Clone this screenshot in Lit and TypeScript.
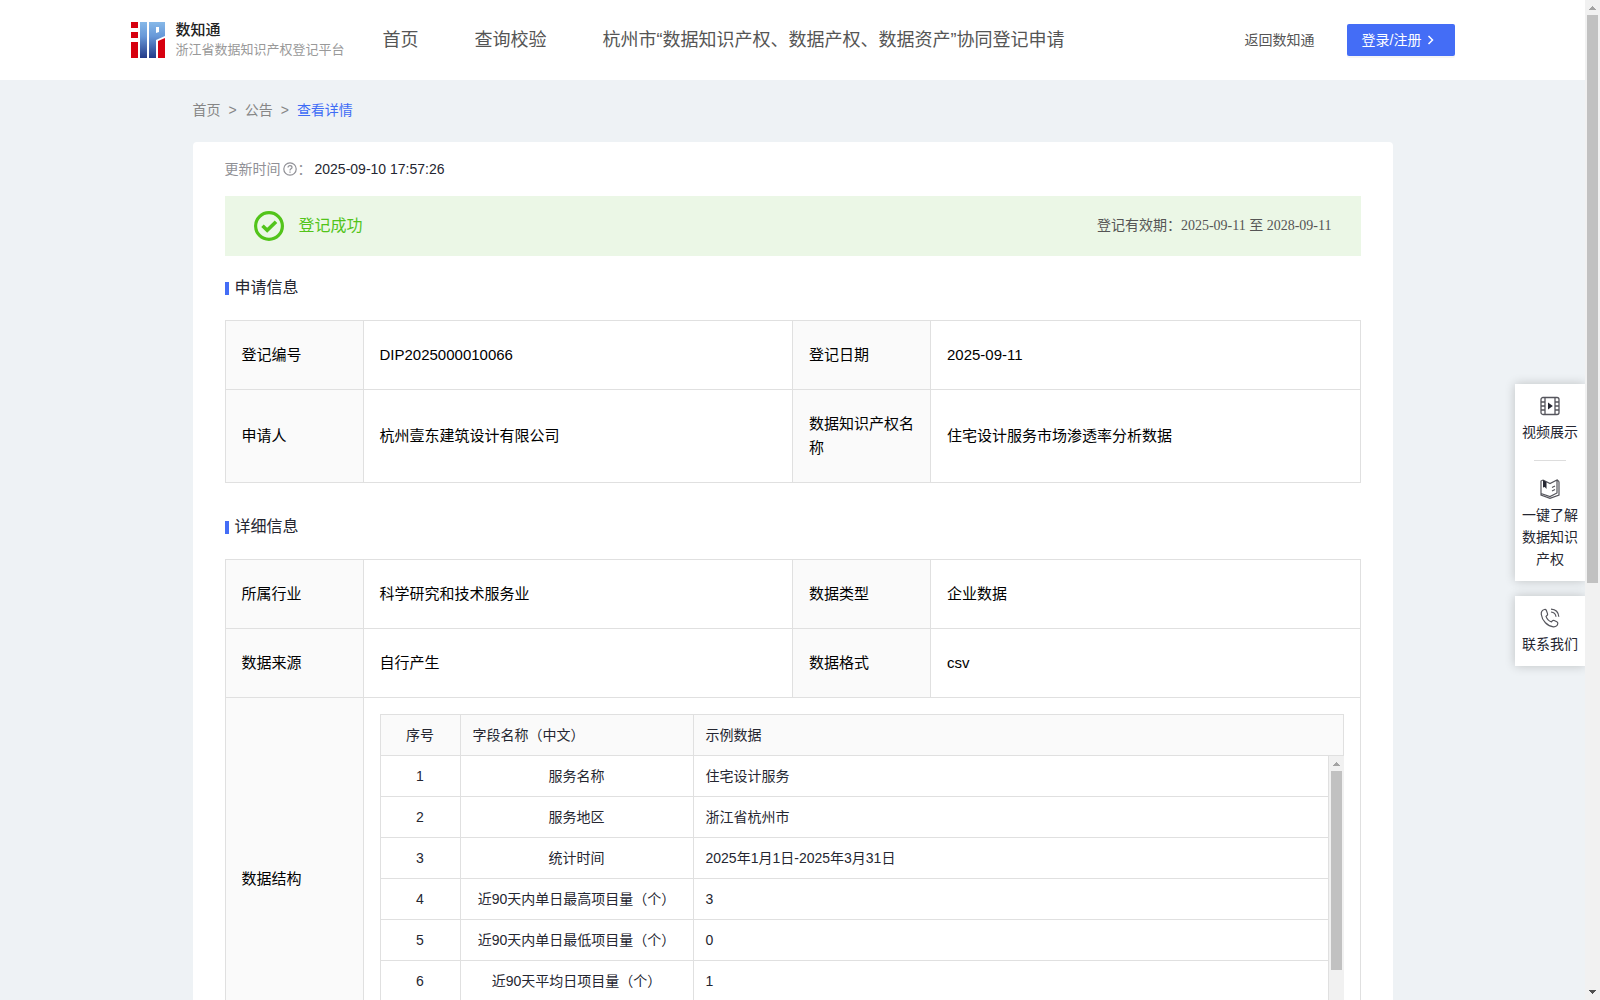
import { LitElement, html, css, svg, nothing } from "lit";
import { customElement } from "lit/decorators.js";

interface Field {
  label: string;
  value: string;
}

interface SampleRow {
  no: number;
  name: string;
  sample: string;
}

const APPLICATION: Field[][] = [
  [
    { label: "登记编号", value: "DIP2025000010066" },
    { label: "登记日期", value: "2025-09-11" },
  ],
  [
    { label: "申请人", value: "杭州壹东建筑设计有限公司" },
    { label: "数据知识产权名称", value: "住宅设计服务市场渗透率分析数据" },
  ],
];

const DETAILS: Field[][] = [
  [
    { label: "所属行业", value: "科学研究和技术服务业" },
    { label: "数据类型", value: "企业数据" },
  ],
  [
    { label: "数据来源", value: "自行产生" },
    { label: "数据格式", value: "csv" },
  ],
];

const SAMPLES: SampleRow[] = [
  { no: 1, name: "服务名称", sample: "住宅设计服务" },
  { no: 2, name: "服务地区", sample: "浙江省杭州市" },
  { no: 3, name: "统计时间", sample: "2025年1月1日-2025年3月31日" },
  { no: 4, name: "近90天内单日最高项目量（个）", sample: "3" },
  { no: 5, name: "近90天内单日最低项目量（个）", sample: "0" },
  { no: 6, name: "近90天平均日项目量（个）", sample: "1" },
];

const logoIcon = svg`
  <svg class="logo-mark" viewBox="0 0 34 36" aria-hidden="true">
    <defs>
      <linearGradient id="logo-blue" gradientUnits="userSpaceOnUse" x1="0" y1="0" x2="0" y2="36">
        <stop offset="0" stop-color="#86b8e8" />
        <stop offset="0.4" stop-color="#6798d8" />
        <stop offset="1" stop-color="#233a88" />
      </linearGradient>
    </defs>
    <path fill="#d7000f" d="M0 0h7v6H0zM0 10h7v6H0zM0 20h7v16H0zM27 19l7-3v20h-7z" />
    <path fill="url(#logo-blue)" fill-rule="evenodd"
      d="M9 0h7v36H9zM18 0h16v14l-9 4v18h-7zM25 5v6l3-1V5z" />
  </svg>`;

@customElement("scroll-track")
export class ScrollTrack extends LitElement {
  static properties = { thumb: { type: Number } };
  declare thumb: number;

  static styles = css`
    :host {
      display: flex;
      flex-direction: column;
      flex: none;
      width: 15px;
      background: #f1f1f1;
    }
    .arrow {
      display: block;
      width: 15px;
      height: 15px;
      flex: none;
    }
    .rail {
      flex: 1;
      min-height: 0;
      padding: 0 2px;
    }
    .thumb {
      width: 11px;
      background: #c1c1c1;
    }
  `;

  render() {
    return html`
      <svg class="arrow" viewBox="0 0 15 15" aria-hidden="true">
        <path fill="#a3a3a3" d="M4 10h7v-1h-1v-1H9v-1H8v-1H7v1H6v1H5v1H4z" />
      </svg>
      <div class="rail"><div class="thumb" style="height:${this.thumb}%"></div></div>
      <svg class="arrow" viewBox="0 0 15 15" aria-hidden="true">
        <path fill="#505050" d="M4 5h7v1h-1v1H9v1H8v1H7V8H6V7H5V6H4z" />
      </svg>
    `;
  }
}

@customElement("app-root")
export class AppRoot extends LitElement {
  static styles = css`
    :host {
      display: flex;
      position: relative;
      height: 100vh;
      overflow: hidden;
      background: #eef2f5;
      color: #252631;
      font-family: "Liberation Sans", "Noto Sans CJK SC", sans-serif;
      font-size: 14px;
      line-height: 22px;
    }
    * {
      box-sizing: border-box;
    }
    a {
      color: inherit;
      text-decoration: none;
    }
    .page {
      flex: 1;
      min-width: 0;
      overflow-y: auto;
      scrollbar-width: none;
    }

    .header {
      background: #fff;
    }
    .header-inner {
      display: flex;
      align-items: center;
      max-width: 1324px;
      height: 80px;
      margin: 0 auto;
      color: #555;
    }
    .logo {
      display: flex;
      align-items: center;
      gap: 11px;
      width: 252px;
      white-space: nowrap;
    }
    .logo-mark {
      width: 34px;
      height: 36px;
    }
    .logo-text {
      display: grid;
    }
    .logo-name {
      color: #222;
      font-size: 15px;
      font-weight: 500;
      line-height: 20px;
    }
    .logo-sub {
      color: #999;
      font-size: 13px;
      line-height: 20px;
    }
    .nav {
      display: flex;
      flex: 1;
      gap: 56px;
      font-size: 18px;
      line-height: 24px;
      white-space: nowrap;
    }
    .back {
      margin-right: 32px;
    }
    .login {
      display: flex;
      align-items: center;
      gap: 4px;
      width: 108px;
      height: 32px;
      padding: 0 15px;
      border: 0;
      border-radius: 2px;
      background: #446df6;
      box-shadow: 0 2px 0 rgba(0, 0, 0, 0.04);
      color: #fff;
      font: inherit;
      white-space: nowrap;
    }
    .login svg {
      width: 12px;
      height: 12px;
    }

    .content {
      max-width: 1200px;
      margin: 0 auto;
    }
    .crumbs {
      display: flex;
      gap: 8px;
      padding: 19px 0 21px;
      color: #868686;
    }
    .crumbs .current {
      color: #3f6cf5;
    }
    .card {
      padding: 16px 32px 32px;
      border-radius: 4px 4px 0 0;
      background: #fff;
    }
    .updated {
      display: flex;
      align-items: center;
      color: #909096;
    }
    .updated svg {
      width: 14px;
      height: 14px;
      margin: 0 1px 0 2px;
    }
    .updated time {
      margin-left: 3px;
      color: #252631;
    }
    .banner {
      display: flex;
      align-items: center;
      height: 60px;
      margin-top: 16px;
      padding: 0 29px;
      background: #ebf7e6;
    }
    .banner svg {
      width: 30px;
      height: 30px;
      margin-right: 15px;
    }
    .banner strong {
      flex: 1;
      color: #52c41a;
      font-size: 16px;
      font-weight: 400;
    }
    .validity {
      color: #555;
      font-family: "Liberation Serif", "Noto Sans CJK SC", serif;
    }
    h2 {
      display: flex;
      align-items: center;
      gap: 6px;
      margin: 20px 0;
      font-size: 16px;
      font-weight: 400;
      line-height: 24px;
    }
    h2::before {
      width: 4px;
      height: 13px;
      background: #446df6;
      content: "";
    }
    .info + h2 {
      margin-top: 32px;
    }

    table {
      width: 100%;
      border-collapse: collapse;
      table-layout: fixed;
    }
    th,
    td {
      border: 1px solid #e0e0e0;
      font-weight: 400;
      text-align: left;
    }
    th {
      background: #fafafa;
    }
    .info {
      color: #000;
      font-size: 15px;
      line-height: 24px;
    }
    .info > tbody > tr > * {
      padding: 22px 16px;
    }
    .info .label-col {
      width: 138px;
    }
    .info > tbody > tr > .nested {
      padding: 16px;
    }
    .samples {
      color: #252631;
      font-size: 14px;
      line-height: 20px;
    }
    .samples th,
    .samples td {
      padding: 10px 12px;
    }
    .samples .no-col {
      width: 80px;
    }
    .samples .name-col {
      width: 233px;
    }
    .samples .center {
      text-align: center;
    }
    .sample-body {
      display: flex;
      height: 288px;
    }
    .sample-view {
      flex: 1;
      min-width: 0;
      overflow-y: auto;
      scrollbar-width: none;
    }
    .sample-view tr:first-child td {
      border-top: 0;
    }

    .side {
      position: absolute;
      top: 384px;
      right: 15px;
      display: grid;
      gap: 15px;
      width: 70px;
      text-align: center;
    }
    .side-box {
      display: grid;
      justify-items: center;
      background: #fff;
      box-shadow: 0 0 10px rgba(0, 0, 0, 0.2);
      clip-path: inset(-12px 0 -12px -12px);
    }
    .side-item {
      display: grid;
      justify-items: center;
      gap: 5px;
      width: 100%;
      padding: 12px 7px 11px;
    }
    .side-box hr + .side-item {
      padding-top: 18px;
    }
    .side-item svg {
      width: 20px;
      height: 20px;
    }
    .side-box hr {
      width: 32px;
      height: 1px;
      margin: 6px 0 0;
      border: 0;
      background: #ddd;
    }
  `;

  private rows(rows: Field[][]) {
    return rows.map(
      (row) => html`<tr>
        ${row.map((f) => html`<th scope="row">${f.label}</th><td>${f.value}</td>`)}
      </tr>`
    );
  }

  private infoTable(rows: Field[][], extra: unknown = nothing) {
    return html`<table class="info">
      <colgroup>
        <col class="label-col" /><col /><col class="label-col" /><col />
      </colgroup>
      <tbody>
        ${this.rows(rows)}${extra}
      </tbody>
    </table>`;
  }

  private sampleCols() {
    return html`<colgroup><col class="no-col" /><col class="name-col" /><col /></colgroup>`;
  }

  private structureRow() {
    return html`<tr>
      <th scope="row">数据结构</th>
      <td class="nested" colspan="3">
        <div class="samples">
          <table>
            ${this.sampleCols()}
            <thead>
              <tr>
                <th class="center" scope="col">序号</th>
                <th scope="col">字段名称（中文）</th>
                <th scope="col">示例数据</th>
              </tr>
            </thead>
          </table>
          <div class="sample-body">
            <div class="sample-view">
              <table>
                ${this.sampleCols()}
                <tbody>
                  ${SAMPLES.map(
                    (s) => html`<tr>
                      <td class="center">${s.no}</td>
                      <td class="center">${s.name}</td>
                      <td>${s.sample}</td>
                    </tr>`
                  )}
                </tbody>
              </table>
            </div>
            <scroll-track .thumb=${77}></scroll-track>
          </div>
        </div>
      </td>
    </tr>`;
  }

  render() {
    return html`
      <div class="page">
        <header class="header">
          <div class="header-inner">
            <a class="logo" href="#">
              ${logoIcon}
              <span class="logo-text">
                <span class="logo-name">数知通</span>
                <span class="logo-sub">浙江省数据知识产权登记平台</span>
              </span>
            </a>
            <nav class="nav">
              <a href="#">首页</a>
              <a href="#">查询校验</a>
              <a href="#">杭州市“数据知识产权、数据产权、数据资产”协同登记申请</a>
            </nav>
            <a class="back" href="#">返回数知通</a>
            <button class="login" type="button">
              登录/注册
              <svg viewBox="0 0 12 12" fill="none" stroke="#fff" stroke-width="1.5" aria-hidden="true">
                <path d="M3.5 2 7.500 6l-4 4" />
              </svg>
            </button>
          </div>
        </header>

        <main class="content">
          <nav class="crumbs">
            <a href="#">首页</a><span>&gt;</span><a href="#">公告</a><span>&gt;</span>
            <a class="current" href="#">查看详情</a>
          </nav>
          <section class="card">
            <div class="updated">
              <span>更新时间</span>
              <svg viewBox="0 0 14 14" fill="none" stroke="#909096" stroke-width="1.2" aria-hidden="true">
                <circle cx="7" cy="7" r="6.200" />
                <path d="M5 5.600C5 4.300 5.900 3.600 7 3.600s2 .7 2 1.800c0 1.400-2 1.500-2 3M7 9.600v1.200" />
              </svg>
              <span>：</span>
              <time>2025-09-10 17:57:26</time>
            </div>
            <div class="banner">
              <svg viewBox="0 0 30 30" fill="none" stroke="#52c41a" aria-hidden="true">
                <circle cx="15" cy="15" r="13.400" stroke-width="3.200" />
                <path d="m8.500 14.800 4.700 4.500 8.800-8.500" stroke-width="3.600" />
              </svg>
              <strong>登记成功</strong>
              <span class="validity">登记有效期：2025-09-11 至 2028-09-11</span>
            </div>
            <h2>申请信息</h2>
            ${this.infoTable(APPLICATION)}
            <h2>详细信息</h2>
            ${this.infoTable(DETAILS, this.structureRow())}
          </section>
        </main>
      </div>
      <scroll-track .thumb=${58.6}></scroll-track>

      <aside class="side">
        <div class="side-box">
          <a class="side-item" href="#">
            <svg viewBox="0 0 20 20" fill="none" stroke="#55555c" stroke-width="1.300" aria-hidden="true">
              <rect x="1" y="1.500" width="18" height="17" rx="2" />
              <path d="M5 1.500v17M15 1.500v17M1 6h4M1 10h4M1 14h4M15 6h4M15 10h4M15 14h4" />
              <path d="m8 6.500 4.800 3.500L8 13.500z" fill="#252631" stroke="none" />
            </svg>
            <span>视频展示</span>
          </a>
          <hr />
          <a class="side-item" href="#">
            <svg viewBox="0 0 20 20" fill="none" stroke="#55555c" stroke-width="1.200" aria-hidden="true">
              <path d="M3 1 1 2v14l9 3.300L19 16V2.500M3 1l7 3.500L17 1v13l-7 3.500L1 14.500M17 1l2 1.500" />
              <path d="M12 8.500 15 7M12 12l3-1.500" />
              <path d="M3 1 6.500 3v7L4.800 8 3 8.500z" fill="#252631" stroke="none" />
            </svg>
            <span>一键了解数据知识产权</span>
          </a>
        </div>
        <div class="side-box">
          <a class="side-item" href="#">
            <svg viewBox="0 0 20 20" fill="none" stroke="#55555c" stroke-width="1.200" aria-hidden="true">
              <path d="M4.500 1.500C2.500 2 1 4 1.300 6.500 2 12.500 7.500 18.300 13.500 18.800c2.300.1 4-1.300 4.300-3.300.1-.8-.3-1.300-1-1.700l-2.600-1.300c-.8-.4-1.400-.2-1.900.4l-.8 1c-2.200-.7-4.700-3.300-5.500-5.500l1-.9c.6-.5.8-1.100.5-1.900L6.400 2.500c-.4-.9-1-1.200-1.900-1z" />
              <path d="M11 1.200c4.500.3 7.500 3.300 7.800 7.600M11 4c2.900.3 4.700 2 5 4.800" />
            </svg>
            <span>联系我们</span>
          </a>
        </div>
      </aside>
    `;
  }
}
